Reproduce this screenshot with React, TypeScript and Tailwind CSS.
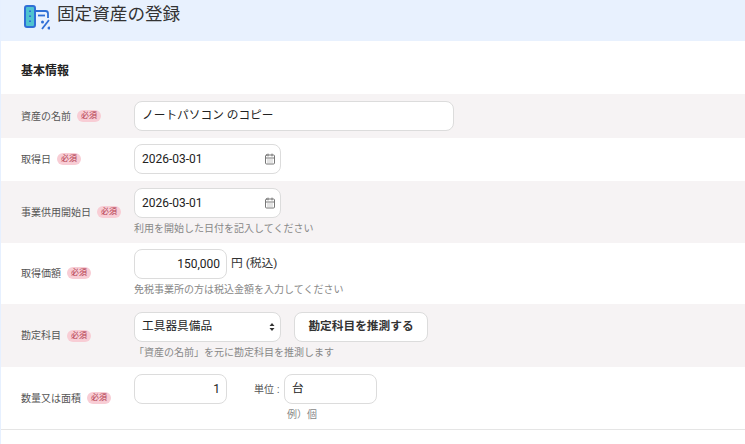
import { CalendarDays } from "lucide-react";
import { ReactNode } from "react";

const inputBox =
  "h-[30px] rounded-[8px] border border-[#dcdcdc] bg-white text-[11.7px] text-[#222] flex items-center";

function Required() {
  return (
    <span className="ml-[6px] flex h-[12px] w-[24px] items-center justify-center rounded-full bg-[#f8cdd5] text-[8px] text-[#b0384e]">
      必須
    </span>
  );
}

function Row({
  label,
  shaded,
  className,
  children,
}: {
  label: string;
  shaded?: boolean;
  className: string;
  children: ReactNode;
}) {
  return (
    <div className={`flex items-center ${shaded ? "bg-[#f6f3f4]" : "bg-white"} ${className}`}>
      <div className="flex w-[133px] shrink-0 items-center pl-[20px] text-[10px] text-[#555]">
        <span>{label}</span>
        <Required />
      </div>
      <div className="flex flex-col">{children}</div>
    </div>
  );
}

function DateBox() {
  return (
    <div className={`${inputBox} w-[147px] justify-between pl-[7px] pr-[4px]`}>
      <span className="text-[12px]">2026-03-01</span>
      <CalendarDays size={12} className="text-[#777]" />
    </div>
  );
}

function Help({ children }: { children: ReactNode }) {
  return <p className="mt-[4px] h-[14px] text-[10px] leading-[14px] text-[#888]">{children}</p>;
}

export default function App() {
  return (
    <div
      className="h-[444px] w-[745px] overflow-hidden border-l border-[#e6f0ff] bg-white"
      style={{ fontFamily: 'Roboto, "Noto Sans CJK JP", sans-serif' }}
    >
      <header className="flex h-[41px] items-start gap-[7px] bg-[#e8f1fe] pl-[23px] pt-[2px]">
        <svg className="mt-[3px]" width="26" height="25" viewBox="0 0 26 25" fill="none">
          <rect x="1" y="1" width="10" height="21" rx="2" fill="#4fc3cf" stroke="#2f6fd6" strokeWidth="2" />
          <path d="M6 5.5v1.5M6 10.5v1.5M6 15.5v1.5" stroke="#2f6fd6" strokeWidth="2" />
          <path d="M11 6h10.500a2.500 2.500 0 0 1 2.500 2.500v4.500" stroke="#2f6fd6" strokeWidth="1.800" />
          <path d="M14 10.500h7" stroke="#2f6fd6" strokeWidth="1.800" />
          <path d="M18 24l7-9" stroke="#2f6fd6" strokeWidth="1.800" />
          <circle cx="18.500" cy="17" r="1.500" fill="#2f6fd6" />
          <circle cx="25" cy="23" r="1.500" fill="#2f6fd6" />
        </svg>
        <h1 className="text-[17.6px] leading-[24px] text-[#333]">固定資産の登録</h1>
      </header>

      <h2 className="flex h-[53px] items-center pl-[20px] pt-[6px] text-[12px] font-bold text-[#222]">
        基本情報
      </h2>

      <Row label="資産の名前" shaded className="h-[44px]">
        <div className={`${inputBox} w-[320px] px-[7px]`}>ノートパソコン のコピー</div>
      </Row>

      <Row label="取得日" className="h-[43px] pb-[1px]">
        <DateBox />
      </Row>

      <Row label="事業供用開始日" shaded className="h-[62px]">
        <DateBox />
        <Help>利用を開始した日付を記入してください</Help>
      </Row>

      <Row label="取得価額" className="h-[61px] pb-[1px]">
        <div className="flex items-center">
          <div className={`${inputBox} w-[93px] justify-end px-[6px] text-[12px]`}>150,000</div>
          <span className="ml-[4px] text-[11.800px] text-[#333]">円 (税込)</span>
        </div>
        <Help>免税事業所の方は税込金額を入力してください</Help>
      </Row>

      <Row label="勘定科目" shaded className="h-[63px]">
        <div className="flex items-center">
          <div className={`${inputBox} w-[147px] justify-between pl-[7px] pr-[4px]`}>
            <span>工具器具備品</span>
            <svg width="8" height="10" viewBox="0 0 8 10" fill="#333">
              <path d="M4 1l2.500 3h-5zM4 9L1.500 6h5z" />
            </svg>
          </div>
          <button className="ml-[13px] h-[30px] w-[134px] rounded-[8px] border border-[#dcdcdc] bg-white text-[11.700px] font-bold text-[#333]">
            勘定科目を推測する
          </button>
        </div>
        <Help>「資産の名前」を元に勘定科目を推測します</Help>
      </Row>

      <Row label="数量又は面積" className="h-[63px] border-b border-[#e5e5e5]">
        <div className="flex items-center">
          <div className={`${inputBox} w-[93px] justify-end px-[6px] text-[12px]`}>1</div>
          <span className="ml-[27px] mr-[3px] w-[27px] text-[10px] text-[#555]">
            単位<span className="ml-[3px]">:</span>
          </span>
          <div className={`${inputBox} w-[93px] px-[7px]`}>台</div>
        </div>
        <p className="ml-[153px] mt-[4px] h-[14px] text-[10px] leading-[14px] text-[#888]">例）個</p>
      </Row>
    </div>
  );
}
